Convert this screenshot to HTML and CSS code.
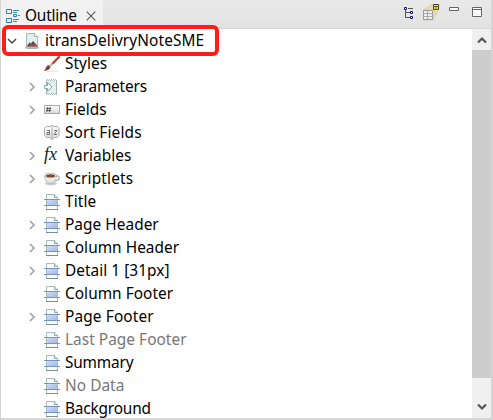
FILE: index.html
```html
<!DOCTYPE html>
<html lang="en">
<head>
<meta charset="utf-8">
<title>Outline</title>
<link rel="stylesheet" href="styles.css">
</head>
<body>
<svg class="defs" width="0" height="0">
  <defs>
    <linearGradient id="blue" x2="1" y2="1"><stop stop-color="#d3dff5"/><stop offset="1" stop-color="#a3b9e8"/></linearGradient>
    <linearGradient id="grey" x2="0" y2="1"><stop stop-color="#fff"/><stop offset="1" stop-color="#d8d8d8"/></linearGradient>
    <symbol id="band" viewBox="0 0 16 16">
      <path d="M2.500.5h8l3 3v12h-11z" fill="#f8fcfb" stroke="#a5bcb8"/>
      <path d="M10.500.5v3h3" fill="#dce9e5" stroke="#8fa9a4"/>
      <path d="M3 5h10v6H3z" fill="url(#blue)"/>
      <path d="M0 5.500h16M0 11.500h16" stroke="#7893c8"/>
      <path d="M2 15.500h12" stroke="#78908b"/>
    </symbol>
    <symbol id="open" viewBox="0 0 10 10"><path d="M1 3l4 4 4-4" fill="none" stroke="#4a4a4a" stroke-width="1.500"/></symbol>
    <symbol id="closed" viewBox="0 0 10 10"><path d="M3 1l4 4-4 4" fill="none" stroke="#a5a5a5" stroke-width="1.700"/></symbol>
  </defs>
</svg>
<div class="view">
  <header class="bar">
    <div class="tab">
      <svg width="14" height="16" viewBox="0 0 14 16"><g fill="#e9f6fc" stroke="#287fb4"><path d="M.5 1.500h5v4h-5zM.5 10.500h5v4h-5z"/><path d="M7.500 6.500h3v2h-3z"/></g><path d="M7 2.500h6M7 4.500h4M12 7.500h2M7 11.500h6M7 13.500h4" stroke="#3487b5"/></svg>
      <span class="tab-name">Outline</span>
      <svg class="close" width="10" height="10" viewBox="0 0 10 10"><path d="M.7.7l8.600 8.600M9.300.7L.7 9.300" stroke="#555" stroke-width="1.100"/></svg>
    </div>
    <div class="tools">
      <svg width="10" height="12" viewBox="0 0 10 12"><path d="M1.500 2v8.500H6M1.500 5.500H6M4 1.500h5" fill="none" stroke="#555"/><g fill="#fff" stroke="#17176d"><path d="M.5.5h2v2h-2zM6.500 4.500h2v2h-2zM6.500 9.500h2v2h-2z"/></g></svg>
      <svg class="report" width="17" height="17" viewBox="0 0 17 17"><path d="M0 6L10 0h6v6l-6 10H0z" fill="#dedcae" stroke="#d0cd99" stroke-width=".6"/><path d="M.5 6.500h9v9h-9z" fill="#eee" stroke="#999"/><path d="M0 9.500h10M0 12.500h10M4.500 7v8" stroke="#aaa"/><path d="M10.500.5h5v5h-5z" fill="#ffed00" stroke="#444"/><path d="M10 2.500h6M13 2v4" stroke="#665f20"/></svg>
      <svg class="min" width="10" height="4" viewBox="0 0 10 4"><path d="M.5.5h9v3h-9z" fill="#fff" stroke="#666"/></svg>
      <svg class="max" width="10" height="10" viewBox="0 0 10 10"><path d="M.5.5h9v9h-9z" fill="#fff" stroke="#666"/><path d="M0 2.500h10" stroke="#666"/></svg>
    </div>
  </header>
  <main class="body">
    <ul class="tree">
      <li class="row root"><svg class="arrow"><use href="#open"/></svg>
        <svg class="icon" viewBox="0 0 16 16"><path d="M2.500.5h8l3 3v12h-11z" fill="#e4eff0" stroke="#a5bbb9"/><path d="M10.500.5v3h3" fill="#fff" stroke="#9ab0ad"/><path d="M2.500 13.500l3-4 1.500 1L9 8l5 5.500z" fill="#505058"/><path d="M4 13.500l3-2.500 2 1 1.500-2.500 3 4z" fill="#b3403e"/><path d="M1 14.500h14" stroke="#bbb"/></svg>
        <span class="label">itransDelivryNoteSME</span></li>
      <li class="row"><i class="arrow"></i>
        <svg class="icon" viewBox="0 0 16 16"><path d="M3 15.500h11" stroke="#e5e5e5"/><path d="M15.500.3L8 8" stroke="#a9332f" stroke-width="2.300"/><path d="M15 0L8 7" stroke="#e27b68" stroke-width=".7"/><path d="M8.500 7.500L6 10" stroke="#bbb" stroke-width="2.500"/><path d="M4.500 9l2 2c-.5 2.500-3 3.500-6.500 4 2-1.500 1.500-5 4.500-6z" fill="#873c30"/></svg>
        <span class="label">Styles</span></li>
      <li class="row"><svg class="arrow"><use href="#closed"/></svg>
        <svg class="icon" viewBox="0 0 16 16"><path d="M2.500 1.500l1-1 1 1 1-1 1 1 1-1 1 1 1-1 1 1 1-1 1 1v14l-1-1-1 1-1-1-1 1-1-1-1 1-1-1-1 1-1-1-1 1z" fill="#e4efed" stroke="#8eaaa7" stroke-width=".9"/><path d="M.5 6.500h3v-3L8 8l-4.500 4V9.500h-3z" fill="#f6fbfa" stroke="#7d9d99" stroke-width=".9"/></svg>
        <span class="label tight">Parameters</span></li>
      <li class="row"><svg class="arrow"><use href="#closed"/></svg>
        <svg class="icon" viewBox="0 0 16 16"><path d="M.5 3.500h15v8H.5z" fill="url(#grey)" stroke="#aaa"/><path d="M3.700 5L3 10M6.200 5l-.7 5M2 6.500h5M2 8.500h5" stroke="#444" stroke-width=".8"/></svg>
        <span class="label">Fields</span></li>
      <li class="row"><i class="arrow"></i>
        <svg class="icon" viewBox="0 0 16 16"><path d="M2.500 1.500H6L8 .5l2 1h3.500l1.500 2v7l-2 2H10L8 15l-2-2.500H2.500l-2-2v-7z" fill="url(#grey)" stroke="#aaa"/><path d="M8 2v11" stroke="#aaa"/><path d="M3 5.500h2.500v4H3v-2h2.500M10 5.500h3l-3 4h3" fill="none" stroke="#666" stroke-width=".9"/></svg>
        <span class="label loose">Sort Fields</span></li>
      <li class="row"><svg class="arrow"><use href="#closed"/></svg>
        <span class="icon fx">fx</span><span class="label">Variables</span></li>
      <li class="row"><svg class="arrow"><use href="#closed"/></svg>
        <svg class="icon" viewBox="0 0 16 16"><ellipse cx="7" cy="12.500" rx="6" ry="1.700" fill="#ccc"/><path d="M12 5c4-1 5 4-1 5" fill="none" stroke="#aaa" stroke-width="1.200"/><path d="M.5 4.500C.5 9 3 12.500 6.500 12.500S12.500 9 12.500 4.500z" fill="url(#grey)" stroke="#aaa" stroke-width=".7"/><ellipse cx="6.500" cy="4.500" rx="6" ry="2.300" fill="#f8f8f8" stroke="#999" stroke-width=".7"/><ellipse cx="6.500" cy="4.800" rx="4.500" ry="1.500" fill="#784522"/></svg>
        <span class="label loose">Scriptlets</span></li>
      <li class="row"><i class="arrow"></i><svg class="icon"><use href="#band"/></svg><span class="label loose">Title</span></li>
      <li class="row"><svg class="arrow"><use href="#closed"/></svg><svg class="icon"><use href="#band"/></svg><span class="label">Page Header</span></li>
      <li class="row"><svg class="arrow"><use href="#closed"/></svg><svg class="icon"><use href="#band"/></svg><span class="label">Column Header</span></li>
      <li class="row"><svg class="arrow"><use href="#closed"/></svg><svg class="icon"><use href="#band"/></svg><span class="label">Detail 1 [31px]</span></li>
      <li class="row"><i class="arrow"></i><svg class="icon"><use href="#band"/></svg><span class="label">Column Footer</span></li>
      <li class="row"><svg class="arrow"><use href="#closed"/></svg><svg class="icon"><use href="#band"/></svg><span class="label loose">Page Footer</span></li>
      <li class="row"><i class="arrow"></i><svg class="icon"><use href="#band"/></svg><span class="label muted">Last Page Footer</span></li>
      <li class="row"><i class="arrow"></i><svg class="icon"><use href="#band"/></svg><span class="label tight">Summary</span></li>
      <li class="row"><i class="arrow"></i><svg class="icon"><use href="#band"/></svg><span class="label muted">No Data</span></li>
      <li class="row"><i class="arrow"></i><svg class="icon"><use href="#band"/></svg><span class="label tight">Background</span></li>
    </ul>
    <div class="scroll">
      <svg width="10" height="8" viewBox="0 0 10 8"><path d="M1 6.500l4-4 4 4" fill="none" stroke="#555" stroke-width="2.200"/></svg>
      <div class="thumb"></div>
      <svg width="10" height="8" viewBox="0 0 10 8"><path d="M1 1.500l4 4 4-4" fill="none" stroke="#555" stroke-width="2.200"/></svg>
    </div>
  </main>
  <div class="highlight"></div>
</div>
</body>
</html>
```
FILE: styles.css
```css
* { box-sizing: border-box; }
body { margin: 0; background: #fff; font: 15.4px/23px "Noto Sans", "Open Sans", sans-serif; color: #000; }
svg { display: block; flex: none; }
.defs { position: absolute; }
.view { position: relative; width: 493px; height: 420px; overflow: hidden; display: flex; flex-direction: column; border: 1px solid #d5d5d5; border-top: 0; border-right-width: 2px; border-bottom-width: 2px; }
.bar { height: 29px; flex: none; display: flex; justify-content: space-between; background: linear-gradient(#e9e9e9, #e2e2e2); border-bottom: 1px solid #d5d5d5; }
.tab { width: 102px; display: flex; align-items: center; padding: 3px 0 0 5px; background: #f1f1f1; }
.tab-name { margin-left: 5px; width: 56px; white-space: nowrap; letter-spacing: -.2px; }
.close { margin-left: 5px; }
.tools { display: flex; align-items: flex-start; padding-top: 7px; margin-right: 9px; }
.report { margin: -3px 0 0 9px; }
.min { margin-left: 9px; }
.max { margin-left: 13px; }
.body { flex: 1; min-height: 0; display: flex; }
.tree { flex: 1; list-style: none; margin: 0; padding: 0; overflow: hidden; }
.row { height: 23px; display: flex; align-items: center; padding-left: 26px; }
.root { padding-left: 6px; }
.arrow { width: 10px; height: 10px; flex: none; }
.icon { width: 16px; height: 16px; flex: none; margin-left: 7px; }
.label { margin-left: 5px; white-space: nowrap; letter-spacing: .04px; }
.root .label { letter-spacing: .1px; }
.tight { letter-spacing: -.18px; }
.loose { letter-spacing: .14px; }
.muted { color: #777; }
.fx { font: italic 18px/13px "Liberation Serif", serif; color: #222; }
.scroll { width: 19px; flex: none; display: flex; flex-direction: column; align-items: center; justify-content: space-between; padding: 7px 0; background: #f0f0f0; }
.thumb { width: 19px; height: 328px; margin-bottom: 20px; background: #cdcdcd; }
.highlight { position: absolute; left: 1px; top: 25px; width: 217px; height: 31px; border: 4px solid #fc1e17; border-radius: 6px; }
```
